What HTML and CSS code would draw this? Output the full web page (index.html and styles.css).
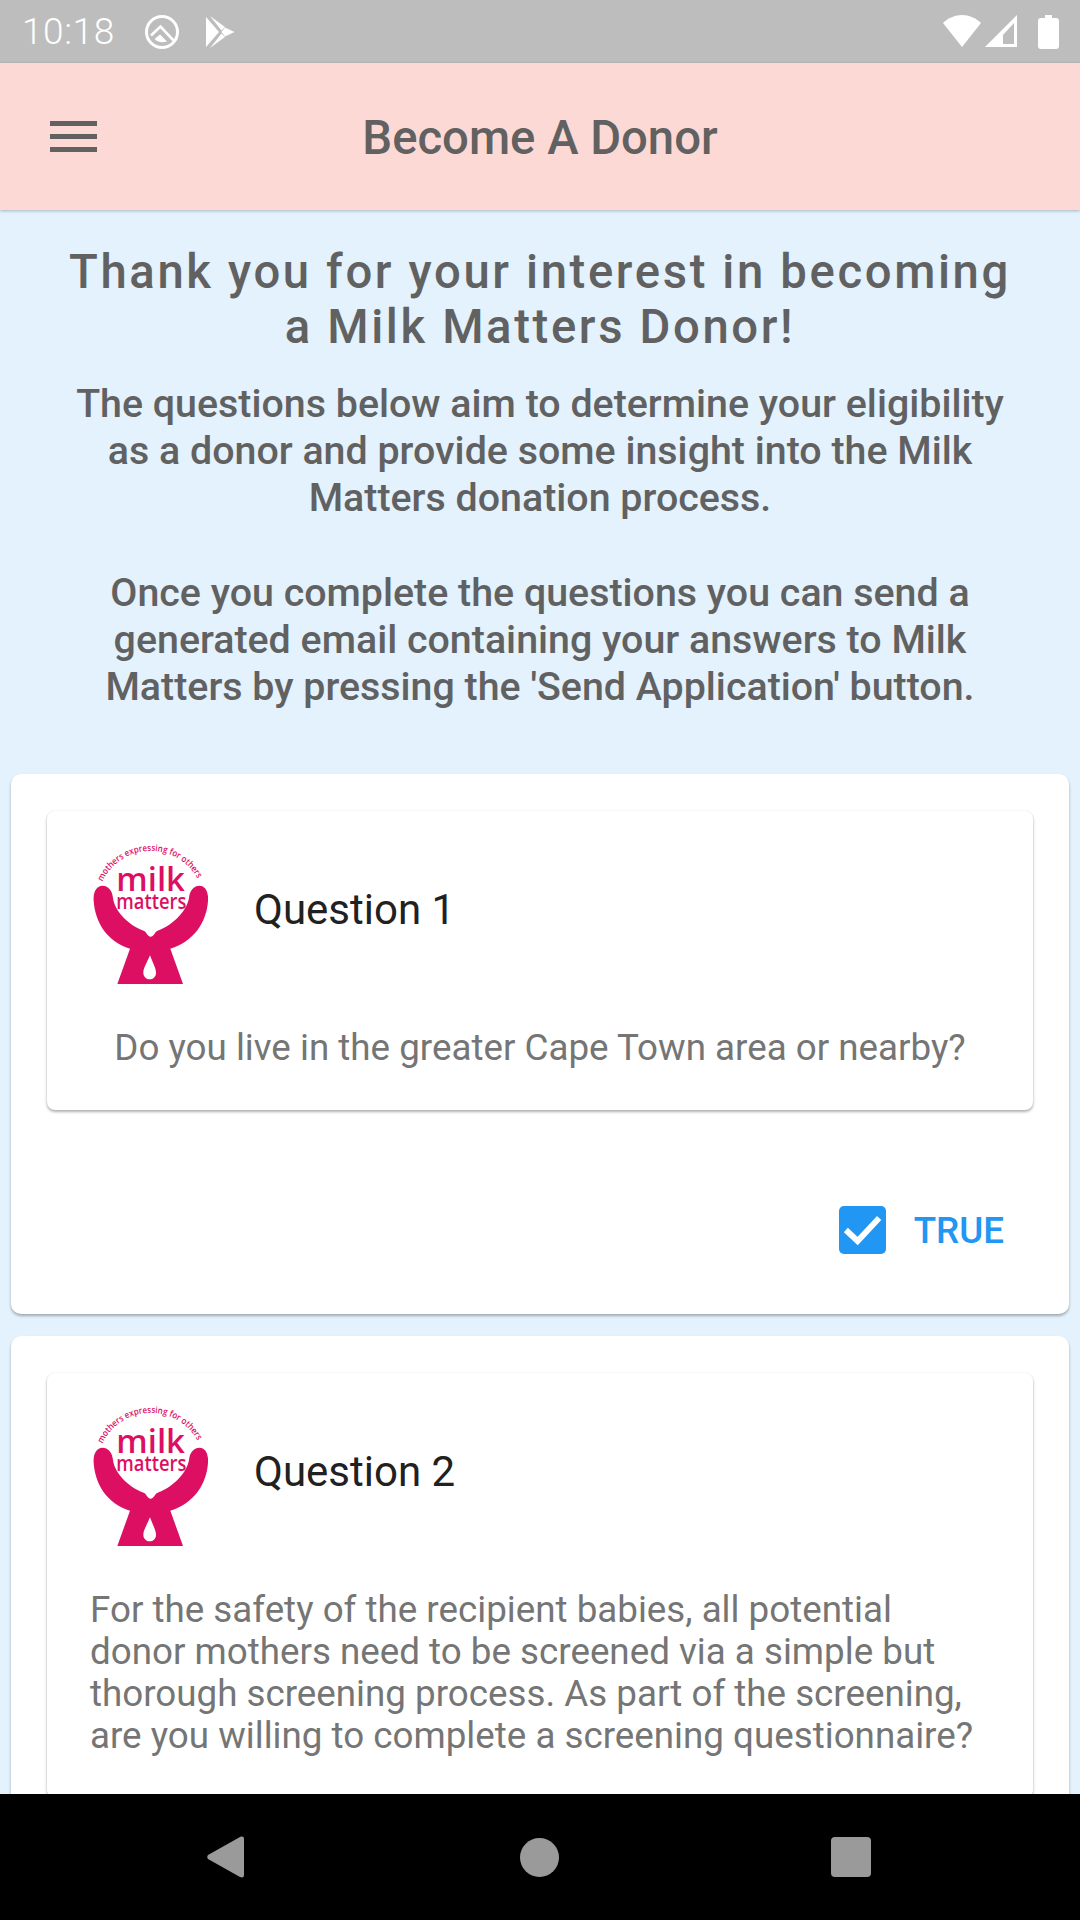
FILE: index.html
```html
<!DOCTYPE html>
<html lang="en">
<head>
<meta charset="utf-8">
<title>Become A Donor</title>
<link rel="stylesheet" href="styles.css">
</head>
<body>
<svg class="defs" width="0" height="0" aria-hidden="true">
  <defs>
    <symbol id="logo" viewBox="70 70 345 420">
      <path fill="#dc0f63" fill-rule="evenodd" d="M72 240C70 212 82 195 98 195C118 195 128 212 130 232C134 268 172 312 222 330C230 333 234 348 243 348C252 348 256 333 264 330C314 312 352 268 358 232C360 212 370 195 390 195C406 195 417 212 415 240C411 305 372 362 302 384L340 490H143L181 384C112 362 76 305 72 240ZM241 404C233 424 221 442 221 456C221 468 230 476 240 476C251 476 259 468 259 456C259 442 248 424 241 404Z"/>
      <path id="logoArc" fill="none" d="M98 183A160 160 0 0 1 388 183"/>
      <text class="logo-arc" fill="#dc0f63"><textPath href="#logoArc" textLength="352" lengthAdjust="spacingAndGlyphs">mothers expressing for others</textPath></text>
      <text class="logo-milk" x="140" y="211" fill="#dc0f63" textLength="206" lengthAdjust="spacingAndGlyphs">milk</text>
      <text class="logo-matters" x="140" y="265" fill="#dc0f63" textLength="210" lengthAdjust="spacingAndGlyphs">matters</text>
    </symbol>
  </defs>
</svg>
<div class="screen">
  <header class="status-bar">
    <div class="status-left">
      <span class="clock">10:18</span>
      <svg class="ic-q" width="36" height="36" viewBox="0 0 36 36"><circle cx="18" cy="18" r="15.5" fill="none" stroke="#fff" stroke-width="3"/><path d="M7 21.5L16.5 12.5L31 28" fill="none" stroke="#fff" stroke-width="2.6"/><path d="M10.5 25L16 20.5L23 27.5C18.5 29 14 28.5 10.5 25Z" fill="#fff"/></svg>
      <svg class="ic-play" width="30" height="32" viewBox="0 0 30 32"><path d="M1 1L14 16L1 31Z" fill="#fff"/><path d="M5 0L20 11L16.5 14.5ZM5 32L20 21L16.5 17.5Z" fill="#fff"/><path d="M20 11.5L29.5 16L20 20.5L16.5 16Z" fill="#fff"/></svg>
    </div>
    <div class="status-right">
      <svg width="38" height="33" viewBox="0 0 38 33"><path d="M0 8C5 3 12 0 19 0C26 0 33 3 38 8L19 32Z" fill="#fff"/></svg>
      <svg width="33" height="34" viewBox="0 0 33 34"><path fill-rule="evenodd" d="M32 0V32H0ZM29 8L18 20V29H29Z" fill="#fff"/></svg>
      <svg width="21" height="34" viewBox="0 0 21 34"><path d="M7 0H14V3H18C20 3 21 4 21 6V31C21 33 20 34 18 34H3C1 34 0 33 0 31V6C0 4 1 3 3 3H7Z" fill="#fff"/></svg>
    </div>
  </header>
  <div class="app-bar">
    <div class="menu"><span></span><span></span><span></span></div>
    <h1>Become A Donor</h1>
  </div>
  <main class="content">
    <section class="intro">
      <h2>Thank you for your interest in becoming<br>a Milk Matters Donor!</h2>
      <p>The questions below aim to determine your eligibility as a donor and provide some insight into the Milk Matters donation process.</p>
      <p class="intro-second">Once you complete the questions you can send a generated email containing your answers to Milk Matters by pressing the 'Send Application' button.</p>
    </section>
    <article class="card">
      <div class="question">
        <div class="q-head">
          <svg class="logo"><use href="#logo"/></svg>
          <span class="q-title">Question 1</span>
        </div>
        <p class="q-text center">Do you live in the greater Cape Town area or nearby?</p>
      </div>
      <div class="answer">
        <svg width="47" height="48" viewBox="0 0 48 48" preserveAspectRatio="none"><rect width="48" height="48" rx="5" fill="#2196f3"/><path d="M7 24L19 35L41 12" fill="none" stroke="#fff" stroke-width="6"/></svg>
        <span>TRUE</span>
      </div>
    </article>
    <article class="card">
      <div class="question">
        <div class="q-head">
          <svg class="logo"><use href="#logo"/></svg>
          <span class="q-title">Question 2</span>
        </div>
        <p class="q-text">For the safety of the recipient babies, all potential donor mothers need to be screened via a simple but thorough screening process. As part of the screening, are you willing to complete a screening questionnaire?</p>
      </div>
    </article>
  </main>
  <nav class="nav-bar">
    <svg width="38" height="42" viewBox="0 0 38 42"><path d="M1 19L33 1C36 0 37 1 37 3V39C37 41 36 42 33 41L1 23C0 22 0 20 1 19Z" fill="#9a9a9a"/></svg>
    <span class="nav-home"></span>
    <span class="nav-recent"></span>
  </nav>
</div>
</body>
</html>
```
FILE: styles.css
```css
* { box-sizing: border-box; }
html, body { margin: 0; padding: 0; }
body { font-family: Roboto, "Liberation Sans", sans-serif; }
.defs { position: absolute; }
.screen { width: 1080px; height: 1920px; display: flex; flex-direction: column; overflow: hidden; background: #e3f2fd; }

.status-bar { height: 63px; flex: none; background: #bdbdbd; display: flex; justify-content: space-between; align-items: center; padding: 0 21px 0 22px; }
.status-left { display: flex; align-items: center; }
.status-right { display: flex; align-items: center; gap: 4px; }
.status-right svg:last-child { margin-left: 16px; }
.clock { color: #fff; font-size: 37px; font-weight: 300; letter-spacing: 0.6px; }
.ic-q { margin-left: 29px; }
.ic-play { margin-left: 25px; }

.app-bar { height: 147px; flex: none; background: #fdd9d5; position: relative; display: flex; align-items: center; justify-content: center; box-shadow: 0 1px 3px rgba(0,0,0,.25); z-index: 1; }
.app-bar h1 { margin: 2px 0 0; font-size: 47.25px; font-weight: 500; color: #616161; }
.menu { position: absolute; left: 50px; top: 58px; width: 47px; display: flex; flex-direction: column; gap: 8px; }
.menu span { height: 5px; background: #616161; }

.content { flex: 1; min-height: 0; overflow: hidden; }
.intro { padding: 35px 64px 0; text-align: center; color: #616161; height: 564px; }
.intro h2 { margin: 0 -40px 25px; font-size: 47.25px; line-height: 55px; font-weight: 500; letter-spacing: 2.625px; }
.intro p { margin: 0; font-size: 39.375px; line-height: 47px; font-weight: 500; }
.intro .intro-second { margin-top: 48px; }

.card { margin: 0 11px 22px; padding: 37px 36px 0; background: #fff; border-radius: 10px; box-shadow: 0 2px 3px rgba(0,0,0,.3); min-height: 540px; }
.question { background: #fff; border-radius: 8px; box-shadow: 0 2px 3px rgba(0,0,0,.3), 0 0 2px rgba(0,0,0,.08); padding: 33px 44px 41px 46px; }
.q-head { display: flex; align-items: center; }
.logo { width: 115px; height: 140px; flex: none; }
.q-title { margin-left: 46px; padding-bottom: 10px; font-size: 42px; color: #212121; }
.q-text { margin: 43px 0 0 -3px; font-size: 36.75px; line-height: 42px; color: #757575; }
.q-text.center { text-align: center; margin-left: -32px; margin-right: -30px; white-space: nowrap; }

.logo-arc { font-family: "Open Sans", sans-serif; font-size: 27px; font-weight: 600; }
.logo-milk { font-family: "Open Sans", sans-serif; font-size: 96px; font-weight: 600; }
.logo-matters { font-family: "Open Sans", sans-serif; font-size: 64px; font-weight: 600; }

.answer { display: flex; justify-content: flex-end; align-items: center; gap: 28px; margin-top: 96px; padding-right: 29px; color: #2196f3; font-size: 36.75px; font-weight: 500; }

.nav-bar { height: 126px; flex: none; background: #000; position: relative; display: flex; align-items: center; padding: 0 0 0 207px; }
.nav-home { width: 39px; height: 39px; margin-left: 275px; border-radius: 50%; background: #9a9a9a; }
.nav-recent { width: 40px; height: 40px; margin-left: 272px; border-radius: 4px; background: #9a9a9a; }
```
